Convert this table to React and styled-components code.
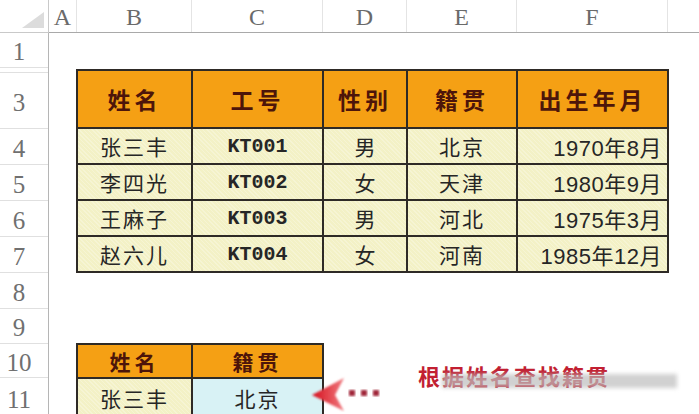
import React from 'react';
import styled, { createGlobalStyle } from 'styled-components';

const GlobalStyle = createGlobalStyle`
  html, body {
    margin: 0;
    padding: 0;
    background: #ffffff;
  }
  body {
    width: 699px;
    height: 414px;
    overflow: hidden;
  }
`;

const COLS = [
  { key: 'A', width: 28 },
  { key: 'B', width: 115 },
  { key: 'C', width: 131 },
  { key: 'D', width: 84 },
  { key: 'E', width: 110 },
  { key: 'F', width: 151 },
  { key: 'G', width: 40, label: '' },
];

const ROWS = [
  { n: '1', h: 35 },
  { n: '', h: 4 },
  { n: '3', h: 56 },
  { n: '4', h: 36 },
  { n: '5', h: 36 },
  { n: '6', h: 36 },
  { n: '7', h: 36 },
  { n: '8', h: 36 },
  { n: '9', h: 35 },
  { n: '10', h: 34 },
  { n: '11', h: 40 },
];

const HEADERS = ['姓名', '工号', '性别', '籍贯', '出生年月'];

const DATA = [
  ['张三丰', 'KT001', '男', '北京', '1970年8月'],
  ['李四光', 'KT002', '女', '天津', '1980年9月'],
  ['王麻子', 'KT003', '男', '河北', '1975年3月'],
  ['赵六儿', 'KT004', '女', '河南', '1985年12月'],
];

const App = () => {
  return (
    <>
      <GlobalStyle />
      <Sheet>
        <Corner>
          <svg width="22" height="16" viewBox="0 0 22 16">
            <polygon points="22,0 22,16 0,16" fill="#dcdcdc" />
          </svg>
        </Corner>

        <ColumnBar>
          {COLS.map((c) => (
            <ColLetter key={c.key} $w={c.width}>
              {c.label === undefined ? c.key : c.label}
            </ColLetter>
          ))}
        </ColumnBar>

        <RowBar>
          {ROWS.map((r, i) => (
            <RowNumber key={i} $h={r.h}>
              {r.n}
            </RowNumber>
          ))}
        </RowBar>

        <Canvas>
          <MainTable>
            {HEADERS.map((h) => (
              <HeadCell key={h}>{h}</HeadCell>
            ))}
            {DATA.map((row) =>
              row.map((v, j) => (
                <DataCell key={v} $kind={j}>
                  {v}
                </DataCell>
              ))
            )}
          </MainTable>

          <LookupRow>
            <LookupTable>
              <HeadCell $small>姓名</HeadCell>
              <HeadCell $small>籍贯</HeadCell>
              <DataCell $kind={0} $tall>
                张三丰
              </DataCell>
              <ResultCell>北京</ResultCell>
            </LookupTable>

            <Callout>
              <svg width="74" height="36" viewBox="0 0 74 36">
                <defs>
                  <linearGradient id="arrowFill" x1="0" y1="0" x2="1" y2="0">
                    <stop offset="0" stopColor="#d6101c" />
                    <stop offset="1" stopColor="#f07a80" />
                  </linearGradient>
                  <filter id="soft">
                    <feGaussianBlur stdDeviation="1" />
                  </filter>
                </defs>
                <polygon
                  points="2,19 34,2 25,19 34,35"
                  fill="url(#arrowFill)"
                  filter="url(#soft)"
                />
                <rect x="39" y="14" width="6" height="6" fill="#a0273a" filter="url(#soft)" />
                <rect x="51" y="14" width="6" height="6" fill="#a0273a" filter="url(#soft)" />
                <rect x="63" y="14" width="6" height="6" fill="#a0273a" filter="url(#soft)" />
              </svg>
              <Note>
                根据姓名查找籍贯
                <Blur />
              </Note>
            </Callout>
          </LookupRow>
        </Canvas>
      </Sheet>
    </>
  );
};

const Sheet = styled.div`
  display: grid;
  grid-template-columns: 49px 1fr;
  grid-template-rows: 33px 1fr;
  width: 699px;
  height: 414px;
  overflow: hidden;
  background: #ffffff;
`;

const Corner = styled.div`
  display: flex;
  align-items: flex-end;
  justify-content: flex-end;
  padding: 0 4px 4px 0;
  border-bottom: 1px solid #c9c9c9;
  border-right: 1px solid #c9c9c9;
`;

const ColumnBar = styled.div`
  display: flex;
  border-bottom: 1px solid #a9a9a9;
  overflow: hidden;
`;

const ColLetter = styled.div`
  flex: 0 0 ${(p) => p.$w}px;
  display: flex;
  align-items: center;
  justify-content: center;
  box-sizing: border-box;
  border-right: 1px solid #e4e4e4;
  font-family: 'Liberation Serif', serif;
  font-size: 24px;
  color: #6a6a6a;
  padding-top: 3px;
`;

const RowBar = styled.div`
  display: flex;
  flex-direction: column;
  border-right: 1px solid #b5b5b5;
  overflow: hidden;
`;

const RowNumber = styled.div`
  flex: 0 0 ${(p) => p.$h}px;
  display: flex;
  align-items: center;
  justify-content: center;
  box-sizing: border-box;
  padding: 4px 10px 0 0;
  overflow: hidden;
  border-bottom: 1px solid #e0e0e0;
  font-family: 'Liberation Serif', serif;
  font-size: 25px;
  color: #707070;
`;

const Canvas = styled.div`
  display: flex;
  flex-direction: column;
  padding: 36px 0 0 27px;
  overflow: hidden;
`;

const MainTable = styled.div`
  display: grid;
  grid-template-columns: 115px 131px 84px 110px 151px;
  grid-template-rows: 58px repeat(4, 36px);
  width: max-content;
  border-top: 2px solid #2e2a26;
  border-left: 2px solid #2e2a26;
`;

const HeadCell = styled.div`
  display: flex;
  align-items: center;
  justify-content: center;
  height: ${(p) => (p.$small ? '32px' : 'auto')};
  background: #f5a014;
  border-right: 2px solid #2e2a26;
  border-bottom: 2px solid #2e2a26;
  font-family: 'Noto Sans CJK SC', sans-serif;
  font-weight: 700;
  font-size: ${(p) => (p.$small ? '21px' : '23px')};
  letter-spacing: 4px;
  color: #4d150a;
`;

const DataCell = styled.div`
  display: flex;
  align-items: center;
  justify-content: ${(p) => (p.$kind === 4 ? 'flex-end' : 'center')};
  padding-right: ${(p) => (p.$kind === 4 ? '5px' : '0')};
  height: ${(p) => (p.$tall ? '38px' : 'auto')};
  background-color: #f3f1c6;
  background-image: repeating-linear-gradient(
    45deg,
    rgba(255, 255, 255, 0.25) 0 1px,
    transparent 1px 3px
  );
  border-right: 2px solid #2e2a26;
  border-bottom: 2px solid #2e2a26;
  font-family: ${(p) =>
    p.$kind === 1
      ? "'Liberation Mono', monospace"
      : "'Liberation Sans', 'Noto Sans CJK SC', sans-serif"};
  font-weight: ${(p) => (p.$kind === 1 ? 700 : 400)};
  font-size: ${(p) => (p.$kind === 1 ? '20px' : p.$kind === 4 ? '22px' : '21px')};
  letter-spacing: ${(p) =>
    p.$kind === 0 || p.$kind === 3 ? '2px' : p.$kind === 4 ? '0.5px' : '0'};
  color: #262626;
`;

const ResultCell = styled(DataCell)`
  justify-content: center;
  height: 38px;
  background-color: #d8f2f5;
  background-image: none;
  letter-spacing: 2px;
`;

const LookupRow = styled.div`
  display: flex;
  align-items: flex-start;
  margin-top: 70px;
`;

const LookupTable = styled.div`
  display: grid;
  grid-template-columns: 115px 131px;
  border-top: 2px solid #2e2a26;
  border-left: 2px solid #2e2a26;
`;

const Callout = styled.div`
  display: flex;
  align-items: flex-start;
  margin: 33px 0 0 -14px;
`;

const Note = styled.div`
  position: relative;
  margin: -17px 0 0 34px;
  font-family: 'Noto Sans CJK SC', sans-serif;
  font-weight: 700;
  font-size: 22px;
  letter-spacing: 2px;
  color: #c21f32;
  white-space: nowrap;
`;

const Blur = styled.span`
  position: absolute;
  left: 24px;
  top: 15px;
  width: 235px;
  height: 14px;
  background: rgba(190, 190, 190, 0.7);
  filter: blur(2px);
`;

export default App;
